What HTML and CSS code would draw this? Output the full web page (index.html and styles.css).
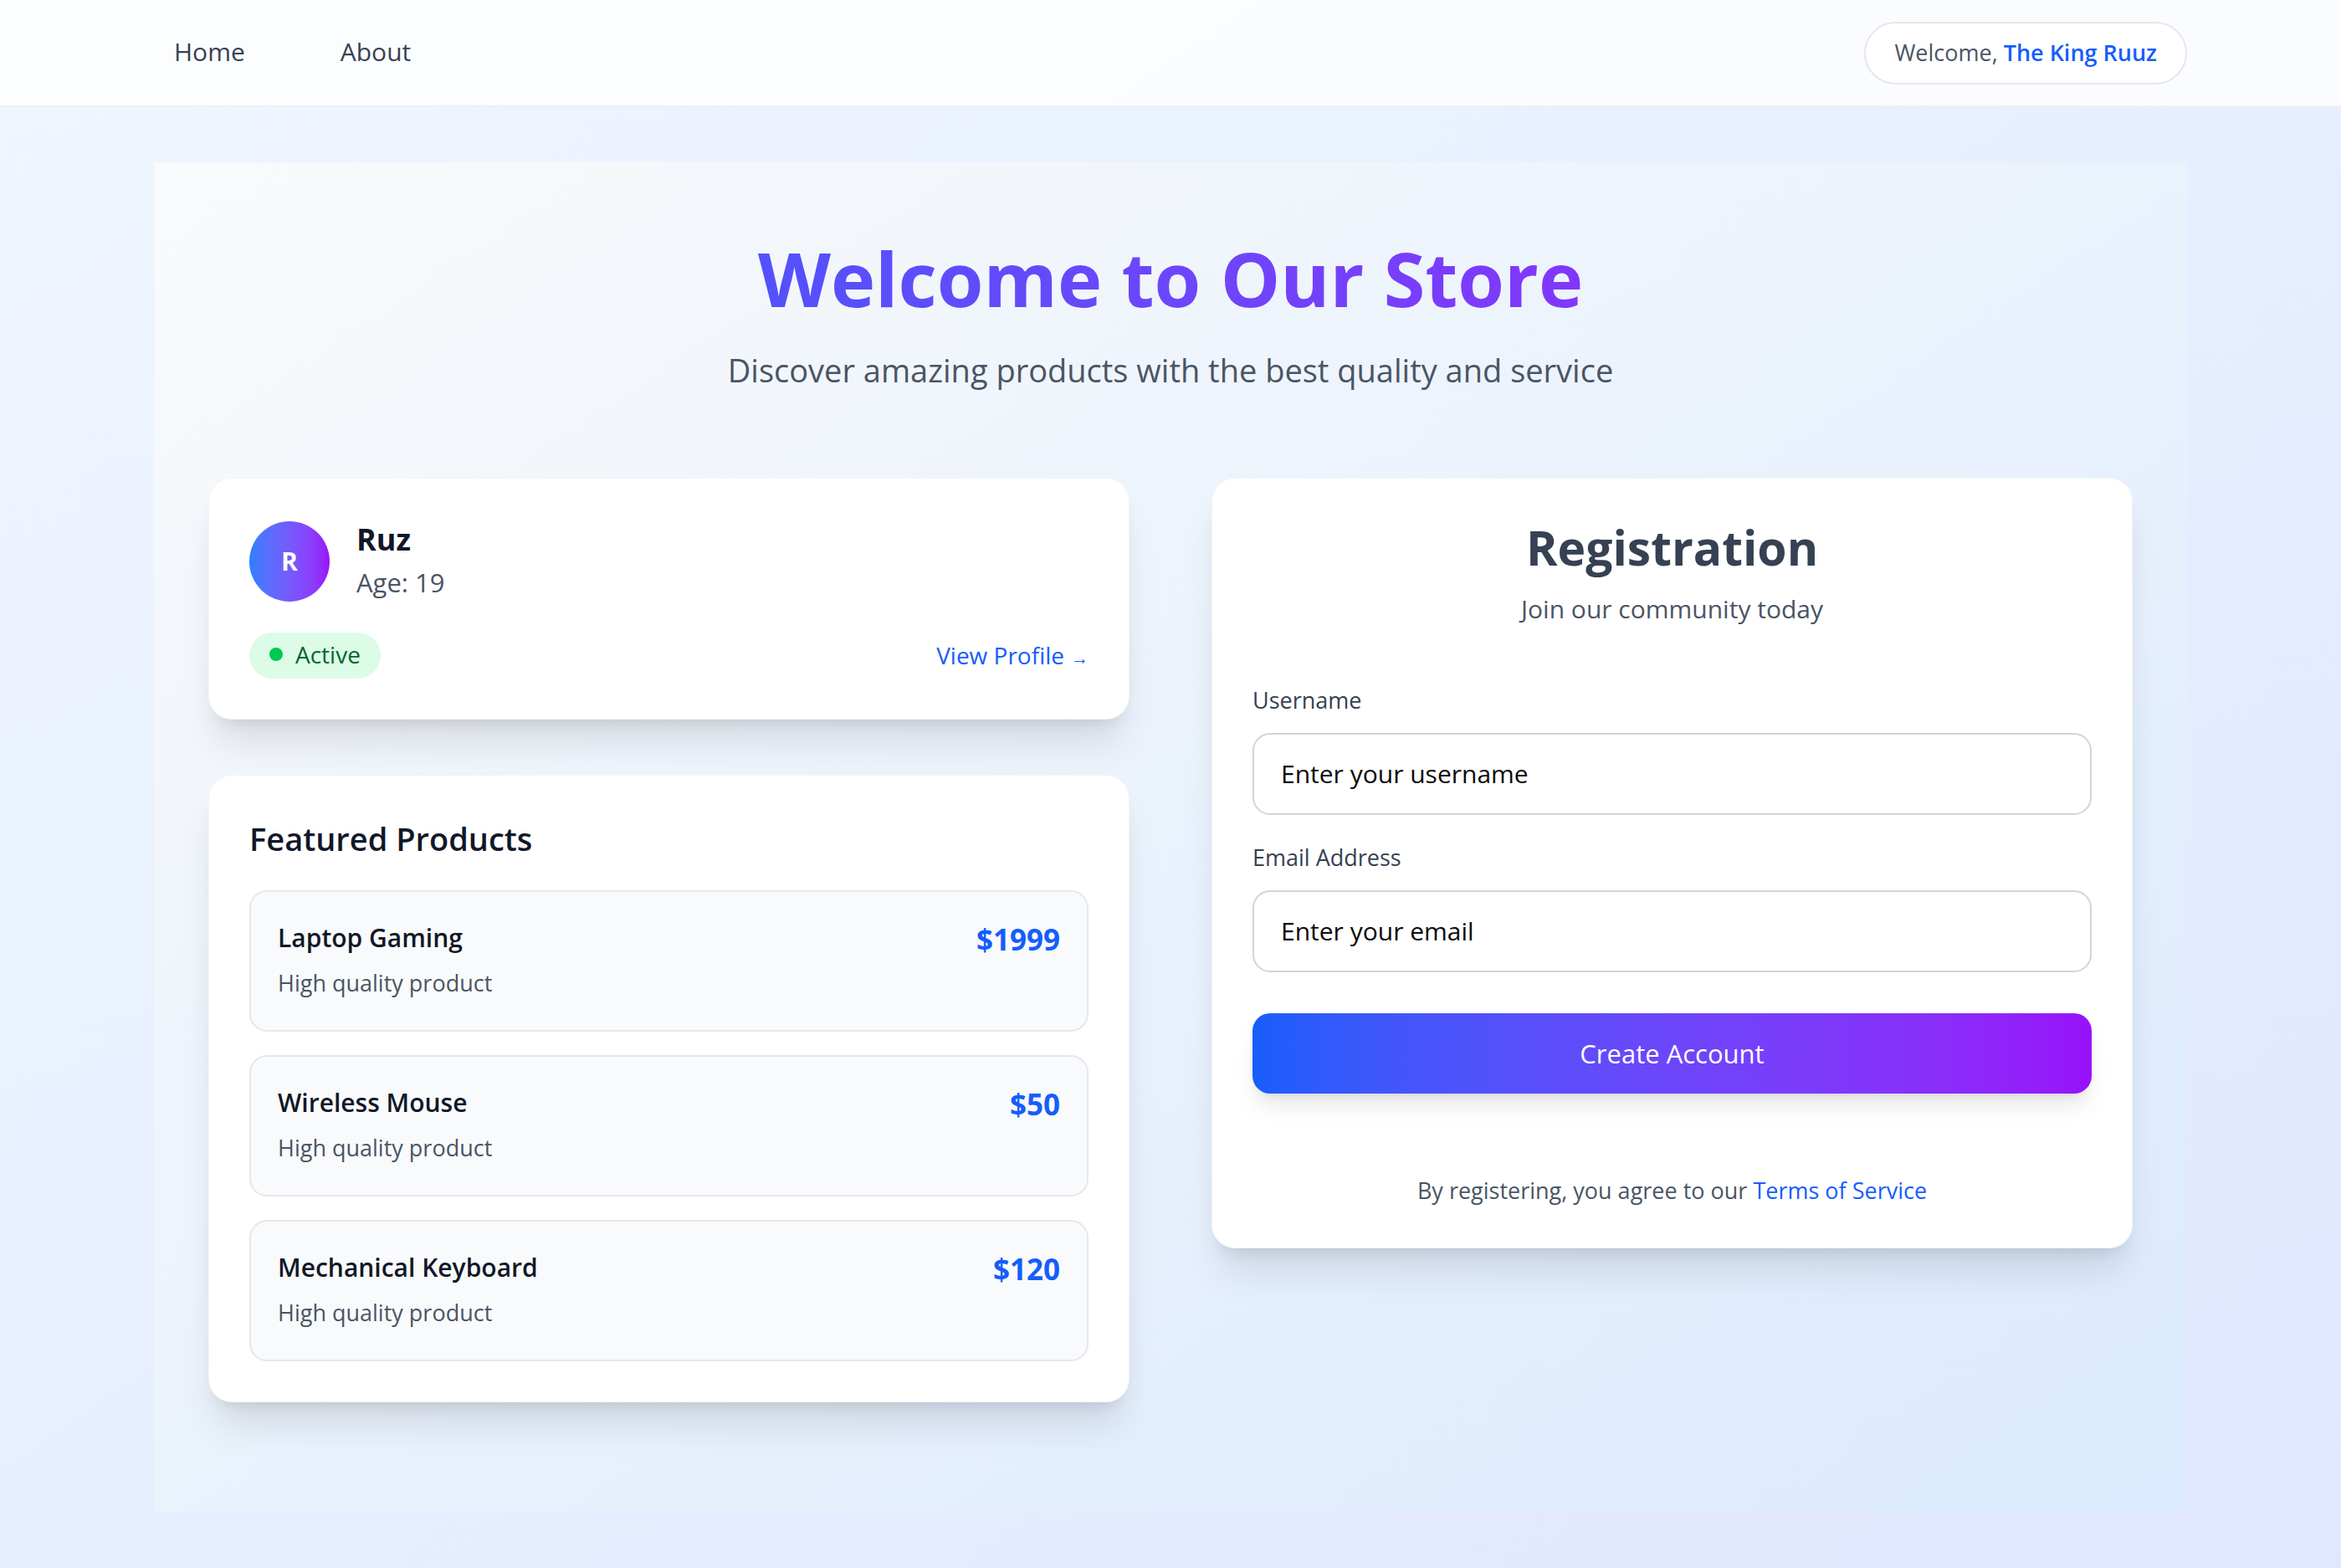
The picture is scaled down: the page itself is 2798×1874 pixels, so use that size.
FILE: index.html
```html
<!DOCTYPE html>
<html lang="en">
<head>
<meta charset="utf-8">
<title>Store</title>
<link rel="stylesheet" href="styles.css">
</head>
<body>
<nav class="nav">
  <div class="nav-inner">
    <div class="nav-links">
      <a class="nav-link" href="#">Home</a>
      <a class="nav-link" href="#">About</a>
    </div>
    <div class="welcome">Welcome,&nbsp;<span class="welcome-name">The King Ruuz</span></div>
  </div>
</nav>
<main class="main">
  <section class="container">
    <h1 class="title">Welcome to Our Store</h1>
    <p class="subtitle">Discover amazing products with the best quality and service</p>
    <div class="grid">
      <div class="col">
        <div class="card">
          <div class="profile-head">
            <div class="avatar">R</div>
            <div>
              <p class="name">Ruz</p>
              <p class="age">Age: 19</p>
            </div>
          </div>
          <div class="profile-foot">
            <span class="badge"><span class="dot"></span>Active</span>
            <a class="view-link" href="#">View Profile<span class="arrow">→</span></a>
          </div>
        </div>
        <div class="card">
          <h2 class="section-title">Featured Products</h2>
          <div class="products">
            <div class="product">
              <div>
                <p class="product-name">Laptop Gaming</p>
                <p class="product-desc">High quality product</p>
              </div>
              <span class="price">$1999</span>
            </div>
            <div class="product">
              <div>
                <p class="product-name">Wireless Mouse</p>
                <p class="product-desc">High quality product</p>
              </div>
              <span class="price">$50</span>
            </div>
            <div class="product">
              <div>
                <p class="product-name">Mechanical Keyboard</p>
                <p class="product-desc">High quality product</p>
              </div>
              <span class="price">$120</span>
            </div>
          </div>
        </div>
      </div>
      <div class="col">
        <div class="card">
          <div class="reg-head">
            <h2 class="reg-title">Registration</h2>
            <p class="reg-sub">Join our community today</p>
          </div>
          <div class="field">
            <label for="username">Username</label>
            <input id="username" type="text" placeholder="Enter your username">
          </div>
          <div class="field">
            <label for="email">Email Address</label>
            <input id="email" type="email" placeholder="Enter your email">
          </div>
          <button class="btn" type="button">Create Account</button>
          <p class="terms">By registering, you agree to our <a href="#">Terms of Service</a></p>
        </div>
      </div>
    </div>
  </section>
</main>
</body>
</html>
```
FILE: styles.css
```css
html, body {
  margin: 0;
  padding: 0;
}

body {
  font-family: "Open Sans", "Noto Sans", sans-serif;
  background: linear-gradient(to bottom right, #eff6ff, #e0e7ff);
  min-height: 100vh;
  color: #101828;
}

p {
  margin: 0;
}

.nav {
  height: 126px;
  background: rgba(255, 255, 255, 0.8);
  border-bottom: 2px solid #eef0f3;
}

.nav-inner {
  width: 2430px;
  height: 100%;
  margin: 0 auto;
  display: flex;
  align-items: center;
  justify-content: space-between;
}

.nav-links {
  display: flex;
  gap: 66px;
}

.nav-link {
  padding: 10px 24px 14px;
  font-size: 30px;
  color: #364153;
  text-decoration: none;
}

.welcome {
  height: 75px;
  box-sizing: border-box;
  display: flex;
  align-items: center;
  padding: 0 34px 2px;
  border: 2px solid #e5e7eb;
  border-radius: 999px;
  background: #fff;
  font-size: 27px;
  color: #4a5565;
}

.welcome-name {
  color: #155dfc;
  font-weight: 600;
}

.main {
  padding: 66px 0 63px;
}

.container {
  width: 2430px;
  margin: 0 auto;
  box-sizing: border-box;
  padding: 86px 65px 131px;
  background: linear-gradient(to bottom right, #f9fafb, #dbeafe);
}

.title {
  margin: 0;
  font-size: 90px;
  line-height: 105.6px;
  font-weight: 700;
  text-align: center;
  background: linear-gradient(to right in oklab, #155dfc, #9810fa);
  -webkit-background-clip: text;
  background-clip: text;
  color: transparent;
}

.subtitle {
  margin-top: 31px;
  font-size: 38px;
  line-height: 50px;
  color: #4a5565;
  text-align: center;
}

.grid {
  margin-top: 104px;
  display: grid;
  grid-template-columns: 1fr 1fr;
  gap: 98px;
  align-items: start;
}

.col {
  display: flex;
  flex-direction: column;
  gap: 66px;
}

.card {
  background: #fff;
  border: 1px solid #f3f4f6;
  border-radius: 28px;
  padding: 48px;
  box-shadow: 0 36px 45px -9px rgba(0, 0, 0, 0.1), 0 14px 18px -11px rgba(0, 0, 0, 0.1);
}

/* profile */
.profile-head {
  display: flex;
  align-items: center;
  gap: 32px;
}

.avatar {
  width: 96px;
  height: 96px;
  flex-shrink: 0;
  border-radius: 50%;
  background: linear-gradient(to right in oklab, #2b7fff, #9810fa);
  color: #fff;
  font-size: 30px;
  font-weight: 700;
  display: flex;
  align-items: center;
  justify-content: center;
}

.name {
  font-size: 36px;
  line-height: 50px;
  font-weight: 700;
  color: #101828;
}

.age {
  font-size: 31px;
  line-height: 52px;
  color: #4a5565;
}

.profile-foot {
  margin-top: 34px;
  display: flex;
  align-items: center;
  justify-content: space-between;
}

.badge {
  display: inline-flex;
  align-items: center;
  gap: 15px;
  height: 55px;
  padding: 0 24px 2px;
  box-sizing: border-box;
  border-radius: 999px;
  background: #dcfce7;
  color: #016630;
  font-size: 28px;
  font-weight: 500;
}

.dot {
  width: 16px;
  height: 16px;
  border-radius: 50%;
  background: #00c950;
}

.view-link {
  color: #155dfc;
  font-size: 28px;
  font-weight: 500;
  text-decoration: none;
}

.arrow {
  font-size: 21px;
  margin-left: 8px;
}

/* products */
.section-title {
  margin: 0 0 35px;
  font-size: 38px;
  line-height: 54px;
  font-weight: 600;
  color: #101828;
}

.products {
  display: flex;
  flex-direction: column;
  gap: 28px;
}

.product {
  display: flex;
  justify-content: space-between;
  align-items: flex-start;
  padding: 35px 32px 37px;
  background: #f9fafb;
  border: 2px solid #e5e7eb;
  border-radius: 21px;
}

.product-name {
  font-size: 30px;
  line-height: 40px;
  font-weight: 600;
  color: #101828;
}

.product-desc {
  margin-top: 15px;
  font-size: 27px;
  line-height: 38px;
  color: #4a5565;
}

.price {
  font-size: 35px;
  line-height: 44px;
  font-weight: 700;
  color: #155dfc;
}

/* registration */
.reg-head {
  text-align: center;
  margin-bottom: 71px;
}

.reg-title {
  margin: 0;
  font-size: 57px;
  line-height: 68px;
  font-weight: 700;
  color: #364153;
}

.reg-sub {
  margin-top: 20px;
  font-size: 30px;
  line-height: 40px;
  color: #4a5565;
}

.field label {
  display: block;
  margin-bottom: 21px;
  font-size: 27px;
  line-height: 36px;
  font-weight: 500;
  color: #364153;
}

.field input {
  display: block;
  width: 100%;
  height: 98px;
  box-sizing: border-box;
  padding: 0 32px;
  border: 2px solid #d1d5dc;
  border-radius: 21px;
  background: #fff;
  font-family: inherit;
  font-size: 30px;
  color: #101828;
  outline: none;
}

.field input::placeholder {
  color: #0a0a0a;
  opacity: 1;
}

.field + .field {
  margin-top: 33px;
}

.btn {
  display: block;
  width: 100%;
  height: 96px;
  margin-top: 49px;
  border: 0;
  border-radius: 21px;
  background: linear-gradient(to right in oklab, #155dfc, #9810fa);
  color: #fff;
  font-family: inherit;
  font-size: 31px;
  font-weight: 500;
  box-shadow: 0 18px 27px -5px rgba(0, 0, 0, 0.1), 0 7px 11px -7px rgba(0, 0, 0, 0.1);
}

.terms {
  margin-top: 96px;
  text-align: center;
  font-size: 27px;
  line-height: 40px;
  color: #4a5565;
}

.terms a {
  color: #155dfc;
  font-weight: 500;
  text-decoration: none;
}
```
